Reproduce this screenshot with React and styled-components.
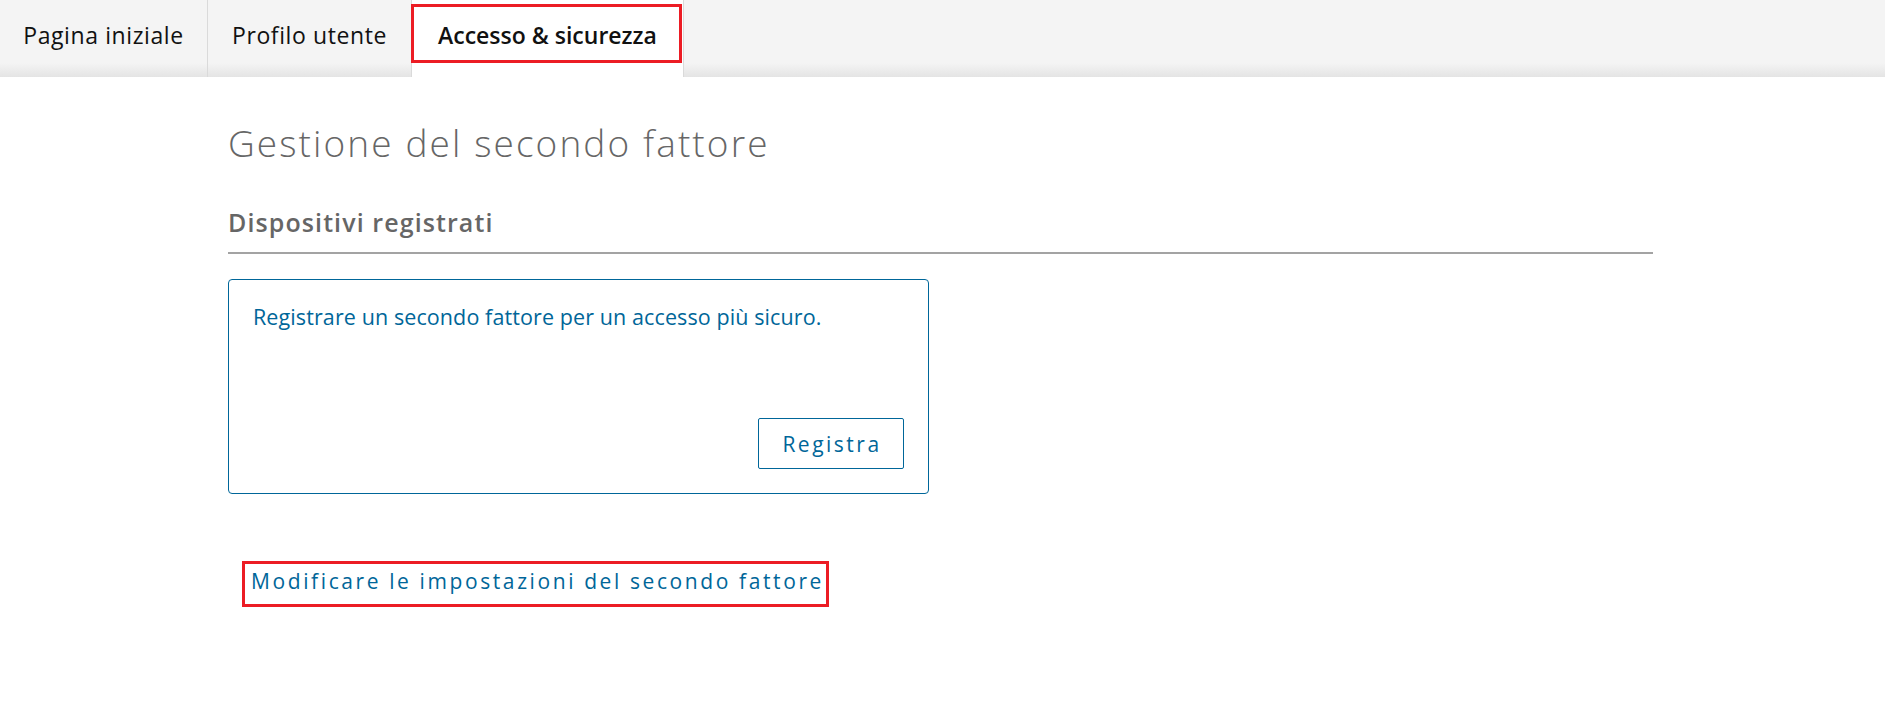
import React from 'react'
import styled, { createGlobalStyle } from 'styled-components'

const GlobalStyle = createGlobalStyle`
    html, body {
        margin:0;
        padding:0;
        background:#ffffff;
        font-family:"Open Sans", "Noto Sans", Arial, sans-serif;
    }
`

const BLUE = '#006699'
const RED = '#ec1c24'

const TabBar = styled.nav`
    display:flex;
    height:77px;
    background:linear-gradient(180deg, #f4f4f4 0%, #f4f4f4 82%, #e4e4e4 100%);
`

const Tab = styled.div`
    display:flex;
    align-items:center;
    justify-content:center;
    width:${p => p.$width}px;
    height:100%;
    box-sizing:border-box;
    padding-bottom:7px;
    font-size:23px;
    letter-spacing:${p => p.$active ? 0 : 0.6}px;
    color:#111;
    font-weight:${p => p.$active ? 600 : 400};
    background:${p => p.$active ? '#ffffff' : 'transparent'};
    border-right:1px solid #dadada;
    position:relative;
    &::after{
        content:'';
        display:${p => p.$active ? 'block' : 'none'};
        position:absolute;
        left:-1px;
        top:4px;
        right:1px;
        bottom:14px;
        border:3px solid ${RED};
    }
`

const Main = styled.main`
    margin:0 232px 0 228px;
    padding-top:42px;
`

const Title = styled.h1`
    margin:0;
    font-size:37px;
    line-height:48px;
    letter-spacing:2.1px;
    font-weight:300;
    color:#666;
`

const SectionTitle = styled.h2`
    margin:39px 0 0;
    padding-bottom:14px;
    font-size:25px;
    line-height:32px;
    letter-spacing:1.1px;
    font-weight:600;
    color:#666;
    border-bottom:2px solid #a3a3a3;
`

const Card = styled.div`
    margin-top:25px;
    width:701px;
    height:215px;
    box-sizing:border-box;
    border:1px solid ${BLUE};
    border-radius:4px;
    padding:22px 24px 24px 24px;
    display:flex;
    flex-direction:column;
    justify-content:space-between;
`

const CardText = styled.p`
    margin:0;
    font-size:21.5px;
    line-height:30px;
    letter-spacing:0.1px;
    color:${BLUE};
`

const OutlineButton = styled.button`
    align-self:flex-end;
    width:146px;
    height:51px;
    padding:0 0 0 2px;
    background:#fff;
    border:1px solid ${BLUE};
    border-radius:2px;
    color:${BLUE};
    font-family:inherit;
    font-size:21px;
    letter-spacing:2.5px;
`

const LinkRow = styled.div`
    margin-top:67px;
    padding-left:14px;
`

const SettingsLink = styled.a`
    display:inline-block;
    padding:3px 2px 9px 6px;
    border:3px solid ${RED};
    color:${BLUE};
    font-size:21px;
    line-height:28px;
    letter-spacing:2.6px;
    text-decoration:none;
`

const tabs = [
    { label: 'Pagina iniziale', width: 208 },
    { label: 'Profilo utente', width: 204 },
    { label: 'Accesso & sicurezza', width: 272, active: true },
]

const App = () => {
    return (
        <>
            <GlobalStyle />
            <TabBar>
                {tabs.map(t => (
                    <Tab key={t.label} $width={t.width} $active={t.active}>{t.label}</Tab>
                ))}
            </TabBar>
            <Main>
                <Title>Gestione del secondo fattore</Title>
                <SectionTitle>Dispositivi registrati</SectionTitle>
                <Card>
                    <CardText>Registrare un secondo fattore per un accesso più sicuro.</CardText>
                    <OutlineButton>Registra</OutlineButton>
                </Card>
                <LinkRow>
                    <SettingsLink href="#">Modificare le impostazioni del secondo fattore</SettingsLink>
                </LinkRow>
            </Main>
        </>
    )
}

export default App
